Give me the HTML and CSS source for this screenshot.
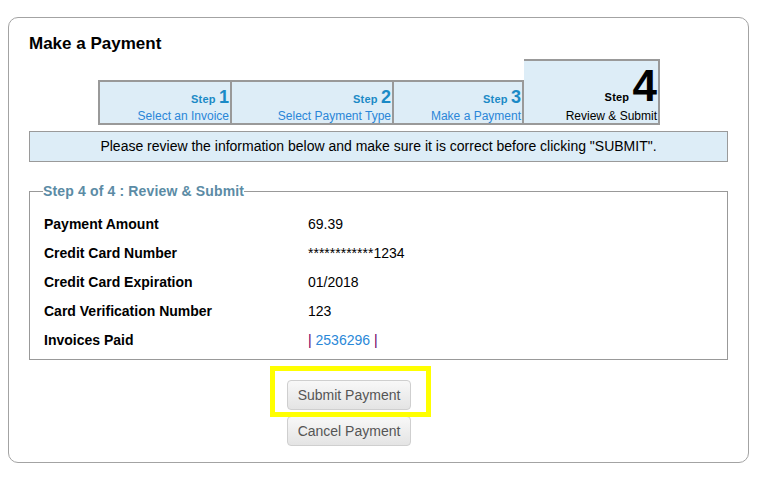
FILE: index.html
```html
<!DOCTYPE html>
<html>
<head>
<meta charset="utf-8">
<link rel="stylesheet" href="styles.css">
</head>
<body>
<div class="card">
  <h1 class="title">Make a Payment</h1>
  <div class="steps">
    <div class="tab">
      <div class="step-line"><span class="step-word">Step </span><span class="step-num">1</span></div>
      <div class="step-sub">Select an Invoice</div>
    </div>
    <div class="tab">
      <div class="step-line"><span class="step-word">Step </span><span class="step-num">2</span></div>
      <div class="step-sub">Select Payment Type</div>
    </div>
    <div class="tab">
      <div class="step-line"><span class="step-word">Step </span><span class="step-num">3</span></div>
      <div class="step-sub">Make a Payment</div>
    </div>
    <div class="tab active">
      <div class="step-line"><span class="step-word">Step </span><span class="step-num">4</span></div>
      <div class="step-sub">Review &amp; Submit</div>
    </div>
  </div>
  <div class="notice">Please review the information below and make sure it is correct before clicking "SUBMIT".</div>
  <fieldset class="review">
    <legend class="review-legend">Step 4 of 4 : Review &amp; Submit</legend>
    <div class="rows">
      <div class="label">Payment Amount</div><div class="value">69.39</div>
      <div class="label">Credit Card Number</div><div class="value">************1234</div>
      <div class="label">Credit Card Expiration</div><div class="value">01/2018</div>
      <div class="label">Card Verification Number</div><div class="value">123</div>
      <div class="label">Invoices Paid</div><div class="value"><span class="pipe">|</span> <a class="inv" href="#">2536296</a> <span class="pipe">|</span></div>
    </div>
  </fieldset>
  <div class="actions">
    <span class="highlight"><button class="btn">Submit Payment</button></span>
    <button class="btn">Cancel Payment</button>
  </div>
</div>
</body>
</html>
```
FILE: styles.css
```css
html, body {
  margin: 0;
  padding: 0;
  background: #fff;
}
body {
  padding: 17px 0 0 8px;
  font-family: "Liberation Sans", Arial, sans-serif;
  color: #000;
}
.card {
  width: 741px;
  box-sizing: border-box;
  border: 1px solid #a3a3a3;
  border-radius: 10px;
  padding: 16px 20px 16px 20px;
}
.title {
  margin: 0;
  font-size: 17px;
  line-height: 20px;
  font-weight: bold;
}
.steps {
  display: flex;
  justify-content: center;
  align-items: flex-end;
  margin-top: 5px;
  padding-left: 1px;
}
.tab {
  box-sizing: border-box;
  height: 45px;
  background: #ddedf7;
  border: 2px solid #999;
  border-left: none;
  display: flex;
  flex-direction: column;
  justify-content: flex-end;
  align-items: flex-end;
  padding-right: 1px;
  color: #1b8ac6;
}
.tab:nth-child(1) { width: 134px; border-left: 2px solid #999; }
.tab:nth-child(2) { width: 162px; }
.tab:nth-child(3) { width: 130px; }
.tab:nth-child(4) { width: 136px; }
.step-line {
  font-size: 18px;
  line-height: 18px;
  font-weight: bold;
  margin-bottom: 3px;
  white-space: nowrap;
}
.step-word {
  font-size: 11px;
  line-height: 11px;
  letter-spacing: 0.2px;
}
.step-num {
  font-size: 18px;
}
.step-sub {
  font-size: 12px;
  line-height: 14px;
  color: #2a86d8;
  white-space: nowrap;
}
.tab.active {
  height: 66px;
  color: #000;
}
.tab.active .step-line {
  font-size: 44px;
  line-height: 44px;
  margin-bottom: 1px;
}
.tab.active .step-word {
  font-size: 11px;
}
.tab.active .step-num {
  font-size: 44px;
}
.tab.active .step-sub {
  color: #000;
}
.notice {
  margin-top: 6px;
  height: 31px;
  box-sizing: border-box;
  border: 1px solid #9a9a9a;
  background: #ddedf7;
  text-align: center;
  font-size: 14px;
  line-height: 29px;
}
.review {
  margin: 21px 0 0 0;
  border: 1px solid #999;
  padding: 11px 13px 4px 13px;
  min-width: 0;
}
.review-legend {
  padding: 0;
  font-size: 14px;
  line-height: 16px;
  font-weight: bold;
  color: #5b8ba5;
  letter-spacing: 0.15px;
}
.rows {
  display: grid;
  grid-template-columns: 265px 1fr;
  font-size: 14px;
  line-height: 29px;
}
.label {
  font-weight: bold;
  padding-left: 1px;
}
.pipe {
  color: #660066;
}
.inv {
  color: #2a88d8;
  text-decoration: none;
}
.actions {
  display: flex;
  flex-direction: column;
  align-items: flex-start;
  gap: 6px;
  margin-top: 20px;
  padding-left: 258px;
}
.highlight {
  position: relative;
  display: block;
}
.highlight::after {
  content: "";
  position: absolute;
  top: -14px;
  left: -17px;
  right: -20px;
  bottom: -7px;
  border: 5px solid #ffff00;
  pointer-events: none;
}
.btn {
  display: block;
  width: 124px;
  height: 30px;
  box-sizing: border-box;
  margin: 0;
  padding: 0;
  border: 1px solid #cfcfcf;
  border-radius: 4px;
  background: linear-gradient(#f8f8f8, #e4e4e4);
  font-family: "Liberation Sans", Arial, sans-serif;
  font-size: 14px;
  color: #555;
  text-align: center;
}
```
